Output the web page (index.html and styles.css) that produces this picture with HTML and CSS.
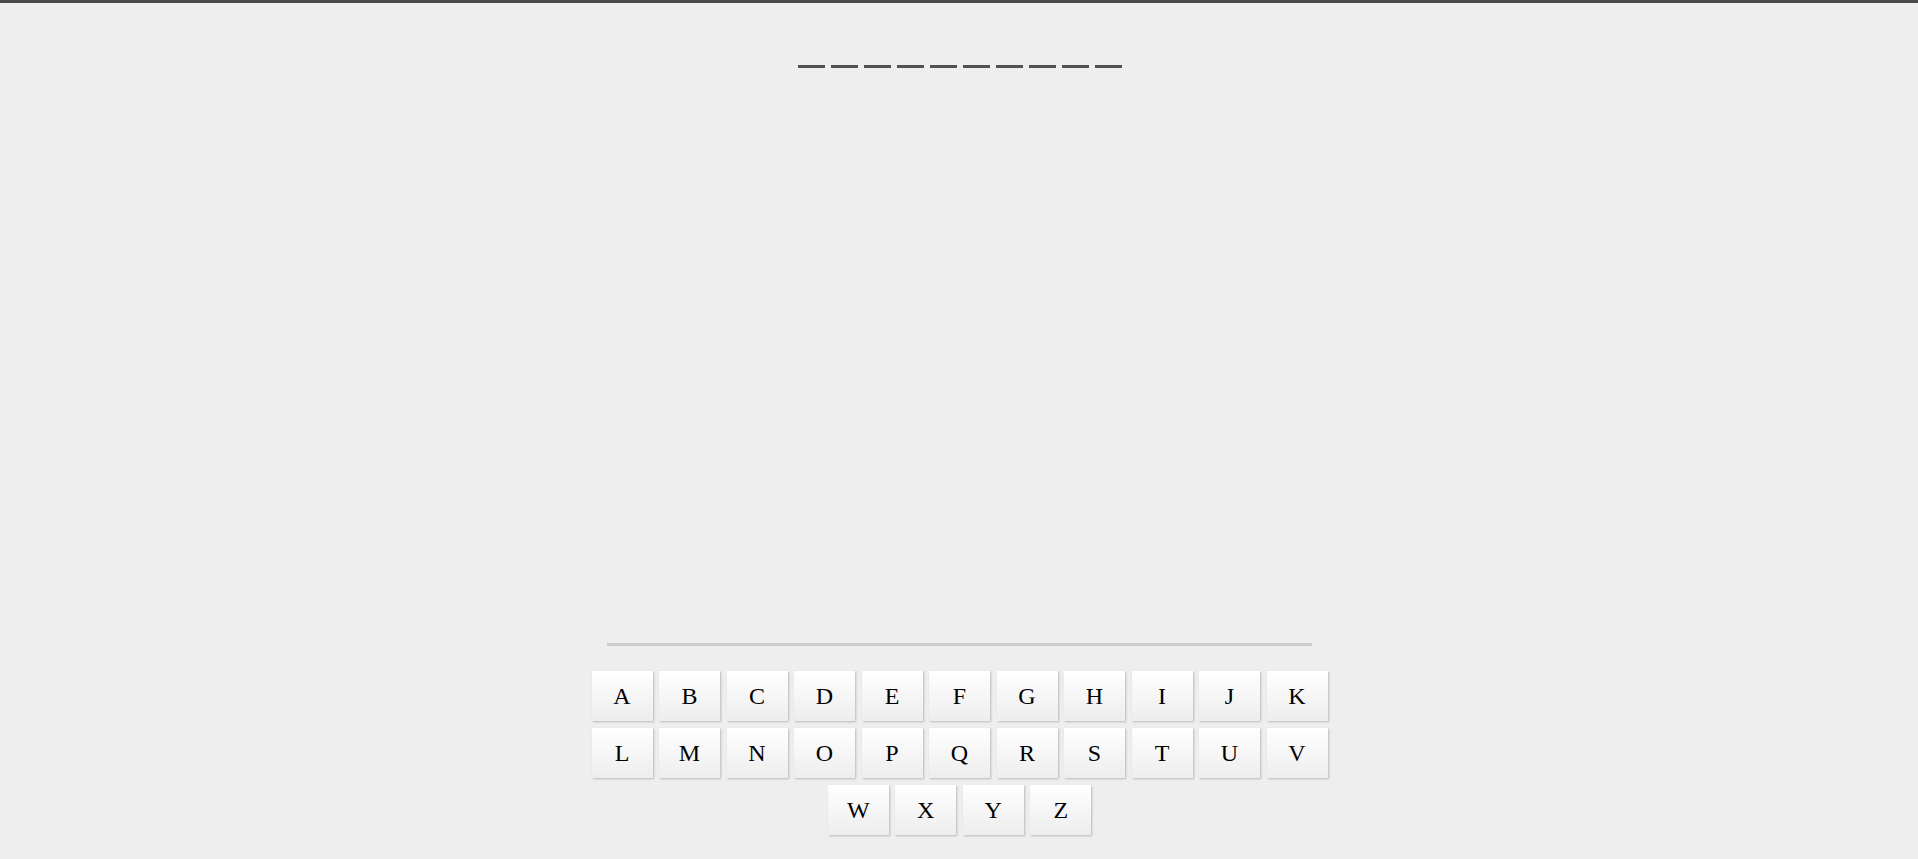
FILE: index.html
```html
<!DOCTYPE html>
<html lang="en">
<head>
<meta charset="utf-8">
<title>Hangman</title>
<link rel="stylesheet" href="styles.css">
</head>
<body>
<div class="word">
  <span class="blank"></span><span class="blank"></span><span class="blank"></span><span class="blank"></span><span class="blank"></span><span class="blank"></span><span class="blank"></span><span class="blank"></span><span class="blank"></span><span class="blank"></span>
</div>
<div class="stage"></div>
<div class="divider"></div>
<div class="keyboard">
  <div class="row">
    <button class="key">A</button><button class="key">B</button><button class="key">C</button><button class="key">D</button><button class="key">E</button><button class="key">F</button><button class="key">G</button><button class="key">H</button><button class="key">I</button><button class="key">J</button><button class="key">K</button>
  </div>
  <div class="row">
    <button class="key">L</button><button class="key">M</button><button class="key">N</button><button class="key">O</button><button class="key">P</button><button class="key">Q</button><button class="key">R</button><button class="key">S</button><button class="key">T</button><button class="key">U</button><button class="key">V</button>
  </div>
  <div class="row">
    <button class="key">W</button><button class="key">X</button><button class="key">Y</button><button class="key">Z</button>
  </div>
</div>
</body>
</html>
```

FILE: styles.css
```css
html, body {
  margin: 0;
  padding: 0;
}
html {
  height: 859px;
  overflow: hidden;
  background: #eeeeee;
}
body {
  box-sizing: border-box;
  height: 859px;
  overflow: hidden;
  background: #eeeeee;
  border-top: 3px solid #4a4a4a;
  font-family: "Liberation Serif", "Times New Roman", serif;
}
.word {
  display: flex;
  justify-content: center;
  gap: 5.7px;
  padding-top: 62px;
  padding-left: 2px;
}
.blank {
  display: block;
  width: 27.3px;
  height: 3px;
  background: #525252;
}
.stage {
  height: 575px;
}
.divider {
  width: 705px;
  height: 3px;
  background: #cccccc;
  margin: 0 auto;
}
.keyboard {
  margin-top: 25px;
  display: flex;
  flex-direction: column;
  gap: 7px;
}
.row {
  display: flex;
  justify-content: center;
  gap: 6.5px;
  padding-left: 1px;
}
.key {
  width: 61px;
  height: 50px;
  border: none;
  margin: 0;
  padding: 0;
  background: linear-gradient(#ffffff, #ededed);
  box-shadow: 1px 1px 2px rgba(0, 0, 0, 0.22);
  font-family: "Liberation Serif", "Times New Roman", serif;
  font-size: 24px;
  color: #000000;
  cursor: pointer;
}
```
